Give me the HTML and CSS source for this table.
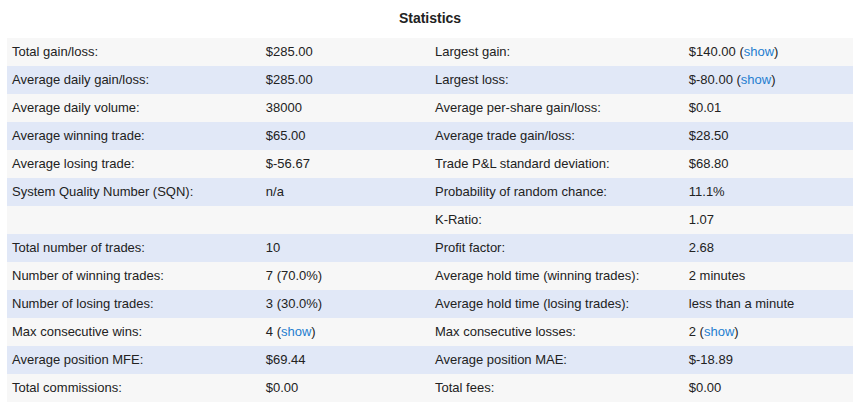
FILE: index.html
```html
<!DOCTYPE html>
<html>
<head>
<meta charset="utf-8">
<link rel="stylesheet" href="styles.css">
</head>
<body>
<div class="wrap">
  <h2 class="title">Statistics</h2>
  <table class="stats">
    <colgroup><col class="c-label"><col class="c-val"><col class="c-label"><col class="c-val"></colgroup>
    <tbody>
      <tr><td>Total gain/loss:</td><td>$285.00</td><td>Largest gain:</td><td>$140.00 (<a href="#">show</a>)</td></tr>
      <tr><td>Average daily gain/loss:</td><td>$285.00</td><td>Largest loss:</td><td>$-80.00 (<a href="#">show</a>)</td></tr>
      <tr><td>Average daily volume:</td><td>38000</td><td>Average per-share gain/loss:</td><td>$0.01</td></tr>
      <tr><td>Average winning trade:</td><td>$65.00</td><td>Average trade gain/loss:</td><td>$28.50</td></tr>
      <tr><td>Average losing trade:</td><td>$-56.67</td><td>Trade P&amp;L standard deviation:</td><td>$68.80</td></tr>
      <tr><td>System Quality Number (SQN):</td><td>n/a</td><td>Probability of random chance:</td><td>11.1%</td></tr>
      <tr><td></td><td></td><td>K-Ratio:</td><td>1.07</td></tr>
      <tr><td>Total number of trades:</td><td>10</td><td>Profit factor:</td><td>2.68</td></tr>
      <tr><td>Number of winning trades:</td><td>7 (70.0%)</td><td>Average hold time (winning trades):</td><td>2 minutes</td></tr>
      <tr><td>Number of losing trades:</td><td>3 (30.0%)</td><td>Average hold time (losing trades):</td><td>less than a minute</td></tr>
      <tr><td>Max consecutive wins:</td><td>4 (<a href="#">show</a>)</td><td>Max consecutive losses:</td><td>2 (<a href="#">show</a>)</td></tr>
      <tr><td>Average position MFE:</td><td>$69.44</td><td>Average position MAE:</td><td>$-18.89</td></tr>
      <tr><td>Total commissions:</td><td>$0.00</td><td>Total fees:</td><td>$0.00</td></tr>
    </tbody>
  </table>
</div>
</body>
</html>
```
FILE: styles.css
```css
html, body {
  margin: 0;
  padding: 0;
  background: #ffffff;
}
body {
  font-family: "Liberation Sans", Arial, Helvetica, sans-serif;
  color: #222222;
}
.wrap {
  padding: 10px 7px 0 7px;
}
.title {
  margin: 0 0 12px 0;
  font-size: 14px;
  line-height: 16px;
  font-weight: bold;
  text-align: center;
  color: #222222;
}
.stats {
  width: 100%;
  border-collapse: collapse;
  table-layout: fixed;
  font-size: 13px;
}
.c-label { width: 30%; }
.c-val { width: 20%; }
.stats td {
  height: 28px;
  box-sizing: border-box;
  padding: 0 5px 2px 5px;
  vertical-align: middle;
  white-space: nowrap;
}
.stats tr:nth-child(odd) { background: #f7f7f7; }
.stats tr:nth-child(even) { background: #e1e8f7; }
.stats a {
  color: #1f7ed0;
  text-decoration: none;
}
```
